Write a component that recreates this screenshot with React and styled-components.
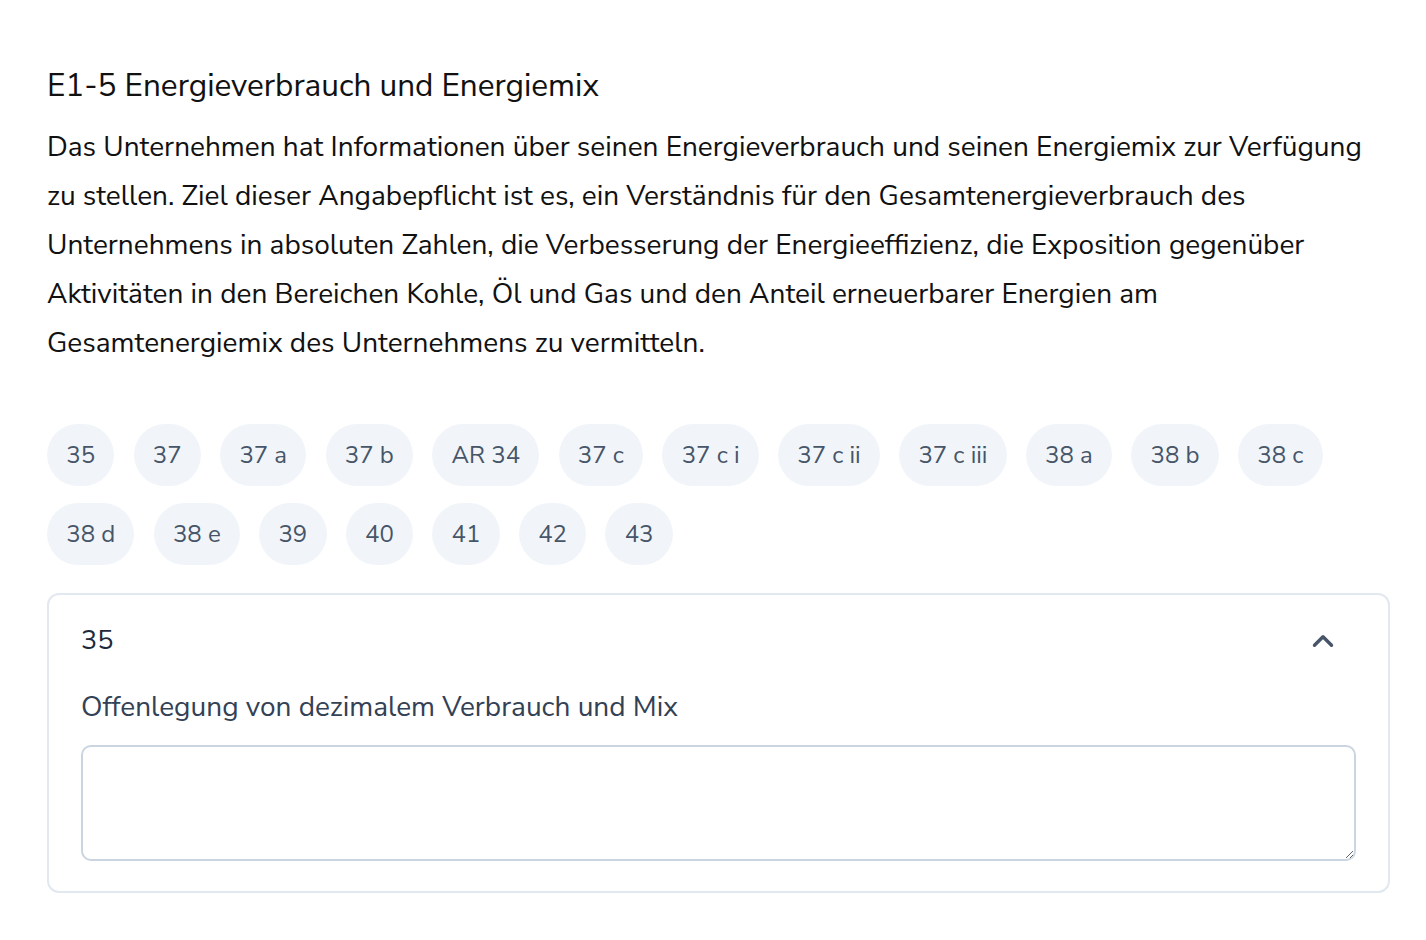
import React from "react";
import styled, { createGlobalStyle } from "styled-components";
import { ChevronUp } from "lucide-react";

const chips = [
  "35", "37", "37 a", "37 b", "AR 34", "37 c", "37 c i", "37 c ii", "37 c iii",
  "38 a", "38 b", "38 c", "38 d", "38 e", "39", "40", "41", "42", "43",
];

const GlobalStyle = createGlobalStyle`
  body {
    margin: 0;
    background: #ffffff;
    font-family: "Nunito Sans", Lato, "Noto Sans", sans-serif;
  }
`;

const Page = styled.main`
  padding: 66px 36px 40px 47px;
`;

const Title = styled.h2`
  margin: 0 0 17px;
  font-size: 31.5px;
  font-weight: 400;
  line-height: 40px;
  color: #111111;
`;

const Intro = styled.p`
  margin: 0;
  max-width: 1330px;
  font-size: 28px;
  line-height: 49px;
  color: #111111;
`;

const ChipList = styled.div`
  display: flex;
  flex-wrap: wrap;
  gap: 17px 19.25px;
  margin-top: 56px;
`;

const Chip = styled.button`
  height: 62px;
  padding: 0 19.25px;
  border: none;
  border-radius: 31px;
  background: #f1f5f9;
  color: #475569;
  font-family: inherit;
  font-size: 24px;
  cursor: pointer;
`;

const Card = styled.section`
  margin-top: 28px;
  border: 2px solid #e2e8f0;
  border-radius: 12px;
  padding: 28px 32px 30px;
`;

const CardHead = styled.div`
  display: flex;
  align-items: center;
  justify-content: space-between;
  font-size: 27px;
  color: #1e293b;
  line-height: 36px;

  svg {
    margin-right: 16px;
  }
`;

const Label = styled.label`
  display: block;
  margin-top: 30px;
  font-size: 28px;
  line-height: 36px;
  color: #334155;
`;

const Area = styled.textarea`
  display: block;
  box-sizing: border-box;
  width: 100%;
  height: 116px;
  margin-top: 20px;
  border: 2px solid #cbd5e1;
  border-radius: 10px;
  font-family: inherit;
  font-size: 24px;
  padding: 12px;
`;

export default function App() {
  return (
    <Page>
      <GlobalStyle />
      <Title>E1-5 Energieverbrauch und Energiemix</Title>
      <Intro>
        Das Unternehmen hat Informationen über seinen Energieverbrauch und seinen Energiemix zur Verfügung
        zu stellen. Ziel dieser Angabepflicht ist es, ein Verständnis für den Gesamtenergieverbrauch des
        Unternehmens in absoluten Zahlen, die Verbesserung der Energieeffizienz, die Exposition gegenüber
        Aktivitäten in den Bereichen Kohle, Öl und Gas und den Anteil erneuerbarer Energien am
        Gesamtenergiemix des Unternehmens zu vermitteln.
      </Intro>
      <ChipList>
        {chips.map((c) => (
          <Chip key={c}>{c}</Chip>
        ))}
      </ChipList>
      <Card>
        <CardHead>
          <span>35</span>
          <ChevronUp size={34} strokeWidth={2.4} color="#475569" />
        </CardHead>
        <Label>Offenlegung von dezimalem Verbrauch und Mix</Label>
        <Area />
      </Card>
    </Page>
  );
}
